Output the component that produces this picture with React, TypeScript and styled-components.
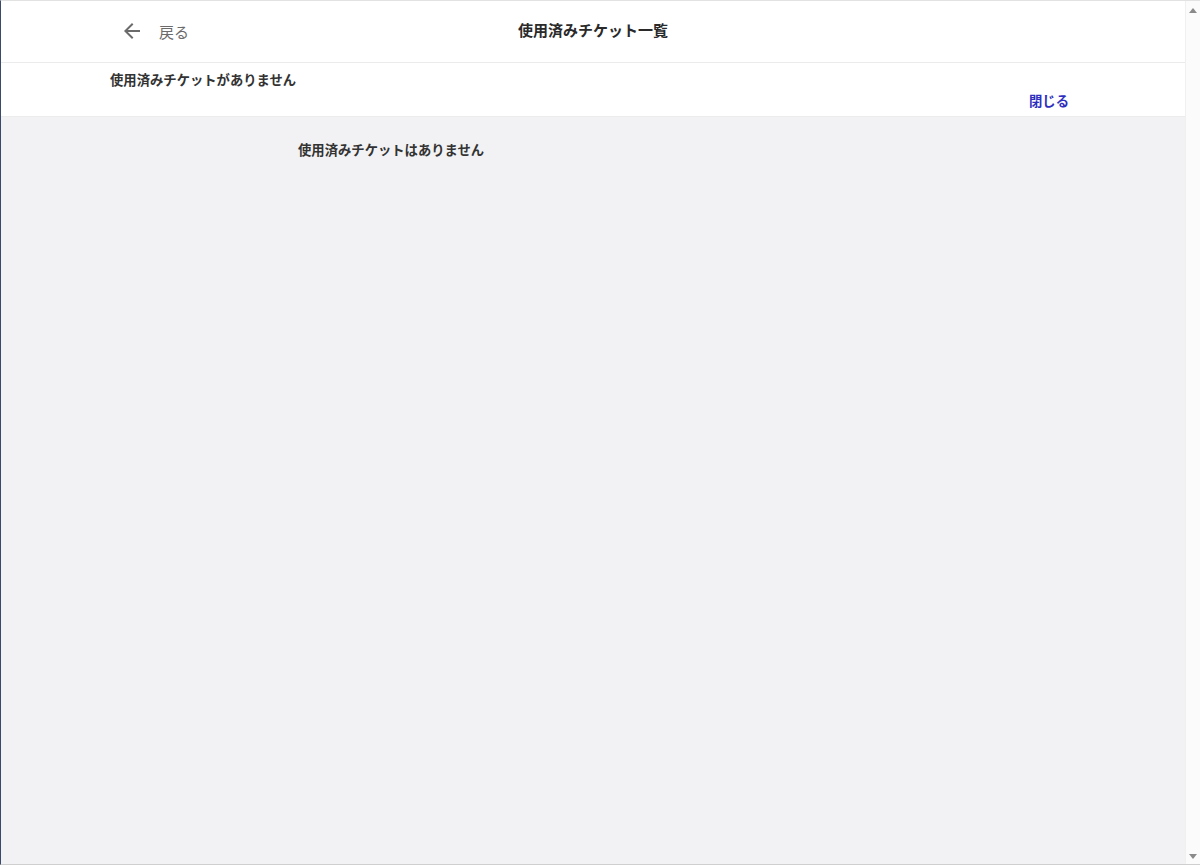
import React from "react";
import styled, { createGlobalStyle } from "styled-components";
import { MdArrowBack } from "react-icons/md";

const GlobalStyle = createGlobalStyle`
  html, body {
    margin: 0;
    padding: 0;
    height: 100%;
    background: #ffffff;
  }
  body {
    font-family: "Noto Sans CJK JP", "Noto Sans", sans-serif;
    color: #333;
  }
  * { box-sizing: border-box; }
`;

const Frame = styled.div`
  width: 1200px;
  height: 865px;
  display: flex;
  border-left: 1px solid #3b4a6b;
  border-top: 1px solid #e2e2e2;
  border-bottom: 1px solid #cfcfcf;
  overflow: hidden;
`;

const Main = styled.div`
  flex: 1;
  display: flex;
  flex-direction: column;
  min-width: 0;
`;

const Header = styled.header`
  height: 62px;
  display: grid;
  grid-template-columns: 1fr auto 1fr;
  align-items: center;
  padding-bottom: 3px;
  border-bottom: 1px solid #ebebeb;
  background: #fff;
`;

const BackButton = styled.button`
  justify-self: start;
  display: flex;
  align-items: center;
  gap: 15px;
  margin: 2px 0 0 119px;
  padding: 0;
  border: none;
  background: none;
  color: #6b6b6b;
  font-family: inherit;
  font-size: 15px;
  cursor: pointer;
`;

const Title = styled.h1`
  margin: 0 0 2px;
  font-size: 15px;
  font-weight: 700;
  color: #2a2a2a;
`;

const Notice = styled.div`
  display: flex;
  flex-direction: column;
  padding: 8px 116px 6px 109px;
  background: #fff;
  border-bottom: 1px solid #ececec;
`;

const NoticeText = styled.p`
  margin: 0;
  font-size: 13.33px;
  line-height: 18px;
  font-weight: 700;
  color: #333;
`;

const CloseLink = styled.a`
  align-self: flex-end;
  margin-top: 3px;
  font-size: 13.33px;
  line-height: 18px;
  font-weight: 700;
  color: #2f2fbf;
  text-decoration: none;
  cursor: pointer;
`;

const Body = styled.main`
  flex: 1;
  background: #f2f2f4;
  padding: 24px 0 0 297px;
`;

const EmptyText = styled.p`
  margin: 0;
  font-size: 13.33px;
  line-height: 18px;
  font-weight: 700;
  color: #333;
`;

const Scrollbar = styled.div`
  width: 15px;
  display: flex;
  flex-direction: column;
  justify-content: space-between;
  align-items: center;
  padding: 7px 0 5px;
  background: #fbfbfb;
  border-left: 1px solid #f0f0f0;
`;

const Arrow = styled.span<{ $down?: boolean }>`
  width: 0;
  height: 0;
  border-left: 4px solid transparent;
  border-right: 4px solid transparent;
  ${(p) =>
    p.$down
      ? "border-top: 5px solid #8a8a8a;"
      : "border-bottom: 5px solid #8a8a8a;"}
`;

export default function App() {
  return (
    <>
      <GlobalStyle />
      <Frame>
        <Main>
          <Header>
            <BackButton>
              <MdArrowBack size={24} />
              戻る
            </BackButton>
            <Title>使用済みチケット一覧</Title>
            <div />
          </Header>
          <Notice>
            <NoticeText>使用済みチケットがありません</NoticeText>
            <CloseLink>閉じる</CloseLink>
          </Notice>
          <Body>
            <EmptyText>使用済みチケットはありません</EmptyText>
          </Body>
        </Main>
        <Scrollbar>
          <Arrow />
          <Arrow $down />
        </Scrollbar>
      </Frame>
    </>
  );
}
